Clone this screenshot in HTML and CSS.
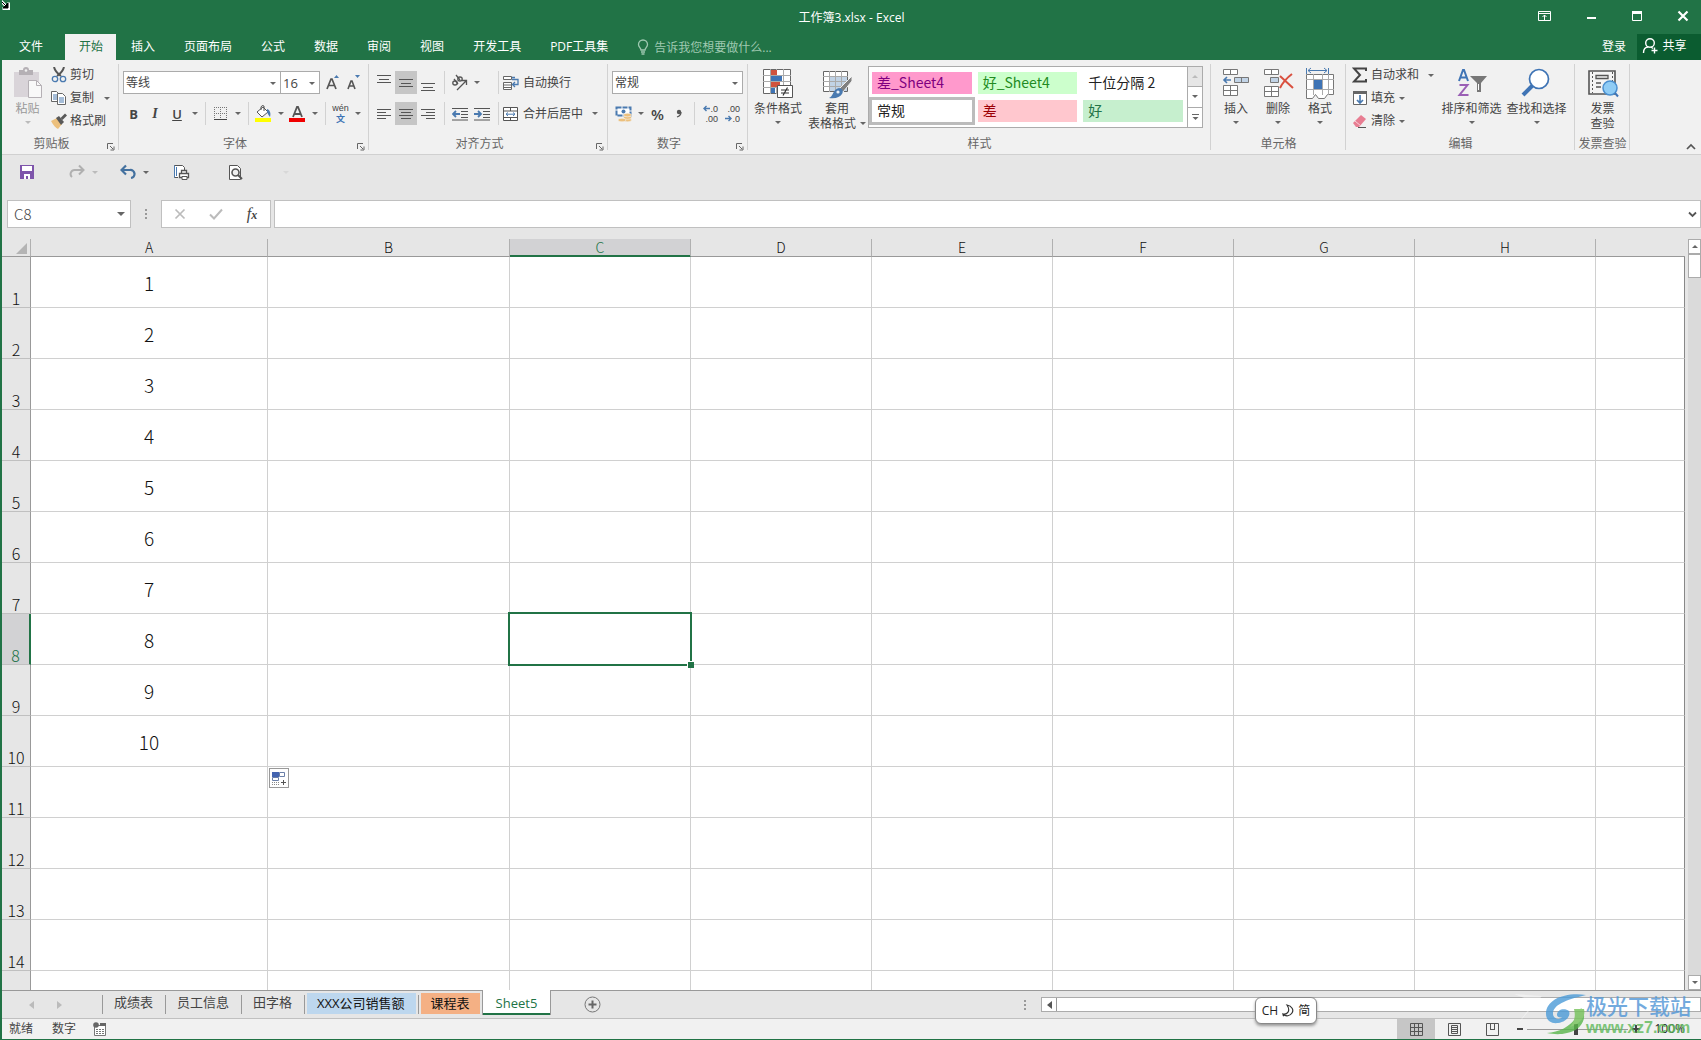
FILE: index.html
```html
<!DOCTYPE html>
<html lang="zh-CN">
<head>
<meta charset="utf-8">
<title>工作簿3.xlsx - Excel</title>
<link rel="stylesheet" href="styles.css">
</head>
<body>
<div class="app">
<header class="top">
  <svg class="cursor" width="10" height="10" viewBox="0 0 10 10"><path d="M1 1l6 6M8.500 2.500v6h-6" stroke="#fff" stroke-width="3" fill="none"/><path d="M1 1l6 6M8 3v5H3z" stroke="#000" stroke-width="1" fill="#000"/></svg>
  <div class="titlebar">
    <h1 class="title">工作簿3.xlsx - Excel</h1>
    <div class="wincontrols">
      <button aria-label="功能区显示选项"><svg width="14" height="12" viewBox="0 0 14 12"><path d="M.5 1.500h12v9H.5zM.5 3.500h12M6.500 10V5M4.500 7l2-2 2 2" fill="none" stroke="#fff"/></svg></button>
      <button aria-label="最小化"><svg width="12" height="12" viewBox="0 0 12 12"><path d="M2 8h9" stroke="#fff" stroke-width="2"/></svg></button>
      <button aria-label="最大化"><svg width="12" height="12" viewBox="0 0 12 12"><path d="M1.500 1.500h9v9h-9z" fill="none" stroke="#fff"/><path d="M1 1h10v3H1z" fill="#fff"/></svg></button>
      <button aria-label="关闭"><svg width="12" height="12" viewBox="0 0 12 12"><path d="M1.500 1.500l9 9M10.500 1.500l-9 9" stroke="#fff" stroke-width="2.200"/></svg></button>
    </div>
  </div>
  <nav class="tabs">
    <button class="tab file">文件</button>
    <button class="tab active">开始</button>
    <button class="tab">插入</button>
    <button class="tab">页面布局</button>
    <button class="tab">公式</button>
    <button class="tab">数据</button>
    <button class="tab">审阅</button>
    <button class="tab">视图</button>
    <button class="tab">开发工具</button>
    <button class="tab">PDF工具集</button>
    <label class="tell"><svg width="12" height="16" viewBox="0 0 12 16"><path d="M4 11c0-2-2.500-3-2.500-5.500a4.500 4.500 0 0 1 9 0C10.500 8 8 9 8 11zM4 13h4M4.500 15h3" fill="none" stroke="#9fc9b1" stroke-width="1.300"/></svg><input type="text" placeholder="告诉我您想要做什么..." aria-label="告诉我您想要做什么"></label>
    <button class="signin">登录</button>
    <button class="share"><svg width="17" height="18" viewBox="0 0 17 18"><circle cx="8" cy="6" r="4.300" fill="none" stroke="#fff" stroke-width="1.400"/><path d="M1.500 16c0-4 2-6 5-6M9 10l2 1.500M12.500 10.500v6M9.500 13.500h6" fill="none" stroke="#fff" stroke-width="1.400"/></svg>共享</button>
  </nav>
</header>

<section class="ribbon" aria-label="开始">
  <div class="group clipboard">
    <div class="body">
      <button class="big paste"><svg width="32" height="32" viewBox="0 0 32 32"><path d="M2 5h25v25H2z" fill="#d9d4d9"/><path d="M7 3h4a3 3 0 0 1 6 0h4v5H7z" fill="#b5b0b5"/><circle cx="14" cy="3.500" r="1.300" fill="#f1f1f1"/><path d="M16.500 13.500h8l5 5v12h-13z" fill="#f8f8f8" stroke="#b5b0b5"/><path d="M24.500 13.500v5h5" fill="none" stroke="#b5b0b5"/></svg><span>粘贴</span><i class="caret"></i></button>
      <div class="stack">
        <button class="mini"><svg width="16" height="16" viewBox="0 0 16 16"><path d="M3 0c1 4 4 7 7 9M13 0c-1 4-4 7-7 9" fill="none" stroke="#555" stroke-width="2"/><circle cx="4" cy="12" r="2.700" fill="none" stroke="#4a7ab0" stroke-width="1.300"/><circle cx="12" cy="12" r="2.700" fill="none" stroke="#4a7ab0" stroke-width="1.300"/></svg>剪切</button>
        <div class="line"><button class="mini"><svg width="16" height="16" viewBox="0 0 16 16"><path d="M.5 1.500h5l2 2v8h-7z" fill="#fff" stroke="#666"/><path d="M2 5h4M2 7h4M2 9h4" stroke="#4a7ab0"/><path d="M6.500 3.500h5l3 3v8h-8z" fill="#fff" stroke="#666"/><path d="M8 8h5M8 10h5M8 12h5" stroke="#4a7ab0"/></svg>复制</button><button class="drop" aria-label="复制选项"><i class="caret"></i></button></div>
        <button class="mini"><svg width="16" height="16" viewBox="0 0 16 16"><path d="M0 8l6-3 5 6-4 5c-2-1-5-4-7-8z" fill="#ecc07d"/><path d="M5 5l3-2 5 6-3 3z" fill="#595959"/><path d="M9.500 5l4.500-4.500 2 2L11.500 7z" fill="#595959"/></svg>格式刷</button>
      </div>
    </div>
    <div class="caption">剪贴板<button class="launch" aria-label="剪贴板设置"><svg width="8" height="8" viewBox="0 0 8 8"><path d="M.5 6V.5H6M3 3l3 3M7 3.500V7H3.500" fill="none" stroke="#666"/></svg></button></div>
  </div>

  <div class="group font">
    <div class="body rows">
      <div class="line">
        <span class="sel fontname"><select aria-label="字体"><option>等线</option></select><i class="caret"></i></span><span class="sel fontsize"><select aria-label="字号"><option>16</option></select><i class="caret"></i></span>
        <button class="ico grow" aria-label="增大字号"><svg width="16" height="16" viewBox="0 0 16 16"><path d="M2 14L6 4h1l4 10M3.500 10.500h6" fill="none" stroke="#555" stroke-width="1.700"/><path d="M9 3l2.500-3L14 3z" fill="#4a7ab0"/></svg></button>
        <button class="ico" aria-label="减小字号"><svg width="16" height="16" viewBox="0 0 16 16"><path d="M2 14l3-8h1l3 8M3 11h5" fill="none" stroke="#555" stroke-width="1.600"/><path d="M9 0l2.500 3L14 0z" fill="#4a7ab0"/></svg></button>
      </div>
      <div class="line">
        <button class="ico b">B</button><button class="ico w i">I</button><button class="ico w u">U</button><button class="drop" aria-label="下划线选项"><i class="caret"></i></button>
        <i class="sep"></i>
        <button class="ico" aria-label="边框"><svg width="14" height="14" viewBox="0 0 14 14"><path d="M.5 0v13M6.500 0v13M12.500 0v13M0 .5h13M0 6.500h13" stroke="#777" stroke-dasharray="1 1"/><path d="M0 12.500h13" stroke="#444"/></svg></button><button class="drop" aria-label="边框选项"><i class="caret"></i></button>
        <i class="sep"></i>
        <button class="ico" aria-label="填充颜色"><svg width="17" height="17" viewBox="0 0 17 17"><path d="M2 7l6-5 5 5-6 5z" fill="#fff" stroke="#555"/><path d="M6 5V2a2 2 0 0 1 3-1v5" fill="none" stroke="#555"/><path d="M12 4c3 1 4 4 3 8-1-1-2-3-3-5z" fill="#4a7ab0"/><path d="M0 13h16v4H0z" fill="#ff0"/></svg></button><button class="drop" aria-label="填充颜色选项"><i class="caret"></i></button>
        <button class="ico" aria-label="字体颜色"><svg width="17" height="17" viewBox="0 0 17 17"><path d="M4 12L8 2h1l4 10M5.500 9h6" fill="none" stroke="#555" stroke-width="1.800"/><path d="M0 13h16v4H0z" fill="#f00000"/></svg></button><button class="drop" aria-label="字体颜色选项"><i class="caret"></i></button>
        <i class="sep"></i>
        <button class="ico wen"><span>wén</span><b>文</b></button><button class="drop" aria-label="拼音选项"><i class="caret"></i></button>
      </div>
    </div>
    <div class="caption">字体<button class="launch" aria-label="字体设置"><svg width="8" height="8" viewBox="0 0 8 8"><path d="M.5 6V.5H6M3 3l3 3M7 3.500V7H3.500" fill="none" stroke="#666"/></svg></button></div>
  </div>

  <div class="group align">
    <div class="body rows">
      <div class="line">
        <button class="ico w" aria-label="顶端对齐"><svg width="14" height="16" viewBox="0 0 14 16"><path d="M0 .5h14M2 4.500h10M0 7.500h14" stroke="#555"/></svg></button>
        <button class="ico w on" aria-label="垂直居中"><svg width="14" height="16" viewBox="0 0 14 16"><path d="M0 4.500h14M2 8.500h10M0 11.500h14" stroke="#555"/></svg></button>
        <button class="ico w" aria-label="底端对齐"><svg width="14" height="16" viewBox="0 0 14 16"><path d="M0 8.500h14M2 12.500h10M0 15.500h14" stroke="#555"/></svg></button>
        <i class="sep"></i>
        <span class="pair"><button class="ico" aria-label="方向"><svg width="17" height="17" viewBox="0 0 17 17"><g fill="none" stroke="#555" stroke-width="1.300"><ellipse cx="4" cy="9" rx="2.200" ry="2"/><path d="M3 5l4 5"/><ellipse cx="9" cy="5" rx="2.200" ry="2"/><path d="M5 1l4 5M6 16L15 7M11 6.500h4.500V11"/></g></svg></button><button class="drop" aria-label="方向选项"><i class="caret"></i></button></span>
        <i class="sep"></i>
        <button class="mini"><svg width="16" height="16" viewBox="0 0 16 16"><path d="M.5 1.500h8v3h-8zM.5 7.500h8v7h-8zM0 10h8M0 12.500h8" fill="#fff" stroke="#666"/><path d="M9 2.500h3M9 4.500h6v5h-5M12 7L9.500 9.500 12 12" fill="none" stroke="#4a7ab0" stroke-width="1.300"/></svg>自动换行</button>
      </div>
      <div class="line">
        <button class="ico w" aria-label="左对齐"><svg width="14" height="12" viewBox="0 0 14 12"><path d="M0 1.500h14M0 4.500h9M0 7.500h14M0 10.500h9" stroke="#555"/></svg></button>
        <button class="ico w on" aria-label="居中"><svg width="14" height="12" viewBox="0 0 14 12"><path d="M0 1.500h14M2 4.500h10M0 7.500h14M2 10.500h10" stroke="#555"/></svg></button>
        <button class="ico w" aria-label="右对齐"><svg width="14" height="12" viewBox="0 0 14 12"><path d="M0 1.500h14M5 4.500h9M0 7.500h14M5 10.500h9" stroke="#555"/></svg></button>
        <i class="sep"></i>
        <span class="pair"><button class="ico w" aria-label="减少缩进量"><svg width="16" height="14" viewBox="0 0 16 14"><path d="M0 1.500h16M9 4.500h7M9 7.500h7M9 10.500h7M0 13h16" stroke="#555"/><path d="M1 7h7M4 4L1 7l3 3" fill="none" stroke="#4a7ab0" stroke-width="1.800"/></svg></button><button class="ico w" aria-label="增加缩进量"><svg width="16" height="14" viewBox="0 0 16 14"><path d="M0 1.500h16M9 4.500h7M9 7.500h7M9 10.500h7M0 13h16" stroke="#555"/><path d="M0 7h7M4 4l3 3-3 3" fill="none" stroke="#4a7ab0" stroke-width="1.800"/></svg></button></span>
        <i class="sep"></i>
        <button class="mini"><svg width="16" height="16" viewBox="0 0 16 16"><path d="M.5 1.500h14v13H.5zM.5 5h14M.5 11.500h14M7.500 1.500V5M7.500 11.500v3" fill="#fff" stroke="#555"/><path d="M3 8.200h9M5 6.500L3 8.200 5 10M10 6.500l2 1.700L10 10" fill="none" stroke="#4a7ab0"/></svg>合并后居中</button><button class="drop far" aria-label="合并选项"><i class="caret"></i></button>
      </div>
    </div>
    <div class="caption">对齐方式<button class="launch" aria-label="对齐设置"><svg width="8" height="8" viewBox="0 0 8 8"><path d="M.5 6V.5H6M3 3l3 3M7 3.500V7H3.500" fill="none" stroke="#666"/></svg></button></div>
  </div>

  <div class="group number">
    <div class="body rows">
      <div class="line"><span class="sel numfmt"><select aria-label="数字格式"><option>常规</option></select><i class="caret"></i></span></div>
      <div class="line">
        <button class="ico w" aria-label="会计数字格式"><svg width="17" height="16" viewBox="0 0 17 16"><path d="M1.500 1.500h14v8h-14z" fill="#fff" stroke="#4a7ab0" stroke-width="2" stroke-dasharray="5 1"/><circle cx="8.500" cy="5.500" r="2" fill="#4a7ab0"/><g fill="#ecc07d" stroke="#f1f1f1" stroke-width=".6"><ellipse cx="12.500" cy="14" rx="4" ry="1.800"/><ellipse cx="12.500" cy="11.500" rx="4" ry="1.800"/><ellipse cx="12.500" cy="9" rx="4" ry="1.800"/><ellipse cx="7" cy="14" rx="4" ry="1.800"/></g></svg></button><button class="drop" aria-label="货币选项"><i class="caret"></i></button>
        <button class="ico pct">%</button>
        <button class="ico" aria-label="千位分隔样式"><svg width="6" height="10" viewBox="0 0 6 10"><circle cx="3" cy="3" r="2.200" fill="#555"/><path d="M5 3c0 3-1 4-4 5" fill="none" stroke="#555" stroke-width="1.300"/></svg></button>
        <i class="sep"></i>
        <button class="ico w dec"><span><svg width="7" height="7" viewBox="0 0 7 7"><path d="M1 3.500h6M3.500 1L1 3.500 3.500 6" fill="none" stroke="#4a7ab0" stroke-width="1.400"/></svg>.0</span><span>.00</span></button>
        <button class="ico w dec"><span>.00</span><span><svg width="7" height="7" viewBox="0 0 7 7"><path d="M0 3.500h6M3.500 1L6 3.500 3.500 6" fill="none" stroke="#4a7ab0" stroke-width="1.400"/></svg>.0</span></button>
      </div>
    </div>
    <div class="caption">数字<button class="launch" aria-label="数字设置"><svg width="8" height="8" viewBox="0 0 8 8"><path d="M.5 6V.5H6M3 3l3 3M7 3.500V7H3.500" fill="none" stroke="#666"/></svg></button></div>
  </div>

  <div class="group styles">
    <div class="body">
      <button class="big cond"><svg width="32" height="32" viewBox="0 0 32 32"><path d="M1.500 2.500h27v24h-27z" fill="#fff" stroke="#666"/><path d="M1 8.500h28M1 14.500h28M1 20.500h28M8.500 2v25M14.500 2v25M21.500 2v25" stroke="#aaa"/><path d="M9 3h6v5H9zM9 15h9v5H9z" fill="#d1533d"/><path d="M9 9h11v5H9zM9 21h4v5H9z" fill="#3f74b5"/><path d="M15.500 18.500h15v12h-15z" fill="#fff" stroke="#555"/><path d="M19 23h8M19 26h8M25.500 20.500l-4.500 8" stroke="#333" stroke-width="1.200"/></svg><span>条件格式</span><i class="caret"></i></button>
      <button class="big tblfmt"><svg width="32" height="32" viewBox="0 0 32 32"><path d="M2.500 4.500h24v20h-24z" fill="#fff" stroke="#666"/><path d="M8 9h18v15H8z" fill="#c1d3e6"/><path d="M2 9.500h25M2 14.500h25M2 19.500h25M8.500 4v21M14.500 4v21M20.500 4v21" stroke="#aaa"/><path d="M31 9v5L22 25l-4-3z" fill="#808080" stroke="#f1f1f1"/><path d="M18 21c3 0 5 3 3 6s-6 5-13 4c4-1 4-9 10-10z" fill="#4a7ab0"/><circle cx="17" cy="25" r="1.600" fill="#e8f0f8"/></svg><span>套用</span><span class="wcaret">表格格式<i class="caret"></i></span></button>
      <div class="gallery">
        <div class="swatches">
          <button class="pink">差_Sheet4</button><button class="lime">好_Sheet4</button><button>千位分隔 2</button>
          <button class="picked">常规</button><button class="bad">差</button><button class="good">好</button>
        </div>
        <div class="galscroll">
          <button class="dim" aria-label="上一行"><i class="caret up"></i></button>
          <button aria-label="下一行"><i class="caret"></i></button>
          <button aria-label="更多样式"><svg width="7" height="7" viewBox="0 0 7 7"><path d="M0 .5h7" stroke="#666"/><path d="M.5 3h6L3.500 6z" fill="#666"/></svg></button>
        </div>
      </div>
    </div>
    <div class="caption">样式</div>
  </div>

  <div class="group cells">
    <div class="body">
      <button class="big"><svg width="32" height="32" viewBox="0 0 32 32"><g fill="#fff" stroke="#777"><path d="M3.500 2.500h14v5h-14zM10.500 2.500v5M3.500 18.500h14v10h-14zM10.500 18.500v10M3.500 23.500h14"/><path d="M14.500 10.500h14v5h-14zM21.500 10.500v5" fill="#c1d3e6"/></g><path d="M4 13h7M7 10l-3 3 3 3" fill="none" stroke="#4a7ab0" stroke-width="1.600"/></svg><span>插入</span><i class="caret"></i></button>
      <button class="big"><svg width="32" height="32" viewBox="0 0 32 32"><g fill="#fff" stroke="#777"><path d="M2.500 2.500h14v5h-14zM9.500 2.500v5M2.500 19.500h14v10h-14zM9.500 19.500v10M2.500 24.500h14"/><path d="M8.500 10.500h8v5h-8z" fill="#c1d3e6"/></g><path d="M18 9l13 12M30 7c-4 3-9 8-12 14" fill="none" stroke="#d9503f" stroke-width="2"/></svg><span>删除</span><i class="caret"></i></button>
      <button class="big"><svg width="32" height="32" viewBox="0 0 32 32"><path d="M2.500 1v6M24.500 1v6M4 3.500h19M7 1L4 3.500 7 6M20 1l3 2.500L20 6" fill="none" stroke="#4a7ab0"/><path d="M2.500 7.500h27v20h-6l-3 4h-6l-3-4-3 4H2.500z" fill="#fff" stroke="#777"/><path d="M2 12.500h28M2 22.500h28M9.500 7v21M18.500 7v21M24.500 7v21" stroke="#aaa"/><path d="M10 13h8v9h-8z" fill="#3f74b5"/></svg><span>格式</span><i class="caret"></i></button>
    </div>
    <div class="caption">单元格</div>
  </div>

  <div class="group edit">
    <div class="body">
      <div class="stack">
        <div class="line"><button class="mini"><svg width="16" height="16" viewBox="0 0 16 16"><path d="M14 4V1.500H2l6 6.500-6 6.500h12V12" fill="none" stroke="#444" stroke-width="2"/></svg>自动求和</button><button class="drop far" aria-label="求和选项"><i class="caret"></i></button></div>
        <button class="mini"><svg width="16" height="16" viewBox="0 0 16 16"><path d="M1.500 1.500h13v13h-13z" fill="#fff" stroke="#666"/><path d="M1 1h14v3H1z" fill="#666"/><path d="M8 5v8M5 10l3 3 3-3" fill="none" stroke="#4a7ab0" stroke-width="1.700"/></svg>填充<i class="caret"></i></button>
        <button class="mini"><svg width="16" height="16" viewBox="0 0 16 16"><path d="M1 10l8-8 5 4-7 8H4z" fill="#e87d92"/><path d="M3 8l6 5" stroke="#f8d0d8"/><path d="M6 14.500h8" stroke="#555"/></svg>清除<i class="caret"></i></button>
      </div>
      <button class="big wide"><svg width="32" height="32" viewBox="0 0 32 32"><path d="M3 14L7 3h1l4 11M4.500 10.500h6" fill="none" stroke="#3f74b5" stroke-width="2"/><path d="M3.500 18h8l-8 10h9" fill="none" stroke="#9a5fb5" stroke-width="2"/><path d="M14 9h17l-6 7v9h-4v-9z" fill="#777"/><path d="M22.500 17v6" stroke="#fff"/></svg><span>排序和筛选</span><i class="caret"></i></button>
      <button class="big wide"><svg width="32" height="32" viewBox="0 0 32 32"><path d="M12 18L2 28" stroke="#3f74b5" stroke-width="4"/><circle cx="18" cy="12" r="9.500" fill="#fff" stroke="#3f74b5" stroke-width="1.700"/></svg><span>查找和选择</span><i class="caret"></i></button>
    </div>
    <div class="caption">编辑</div>
  </div>

  <div class="group invoice">
    <div class="body">
      <button class="big"><svg width="32" height="32" viewBox="0 0 32 32"><path d="M2 4h26v23H2z" fill="#f4f4f4" stroke="#555" stroke-width="1.600"/><path d="M5.500 5v21M25.500 5v21" stroke="#555" stroke-dasharray="2 2"/><path d="M9 8.500h12v3H9z" fill="none" stroke="#555" stroke-width="1.300"/><path d="M9 16h5M9 20h5" stroke="#555" stroke-width="1.500"/><circle cx="23" cy="21" r="7" fill="#8fccf5" stroke="#4a8fd0" stroke-width="1.500"/><path d="M28 26l3 3.500" stroke="#3f74b5" stroke-width="2"/></svg><span>发票</span><span>查验</span></button>
    </div>
    <div class="caption">发票查验</div>
  </div>
  <button class="collapse" aria-label="折叠功能区"><svg width="10" height="7" viewBox="0 0 10 7"><path d="M1 6l4-4 4 4" fill="none" stroke="#555" stroke-width="1.700"/></svg></button>
</section>

<div class="qat">
  <button aria-label="保存"><svg width="16" height="16" viewBox="0 0 16 16"><path d="M1 1h14v14H1z" fill="#7e55ab"/><path d="M3 2h10v5H3zM5 10h6v5H5z" fill="#fff"/><path d="M7 12h2v3H7z" fill="#7e55ab"/></svg></button>
  <button class="dim redo" aria-label="恢复"><svg width="16" height="16" viewBox="0 0 16 16"><path d="M14 6H6a4 4 0 0 0-3 7M10 1.500L14.500 6 10 10.500" fill="none" stroke="#b0b0b0" stroke-width="2"/></svg></button><button class="dim more" aria-label="恢复选项"><i class="caret"></i></button>
  <button aria-label="撤消"><svg width="16" height="16" viewBox="0 0 16 16"><path d="M2 6h8a4 4 0 0 1 1 8M6 1.500L1.500 6 6 10.500" fill="none" stroke="#44719f" stroke-width="2.200"/></svg></button><button class="more" aria-label="撤消选项"><i class="caret"></i></button>
  <button class="print" aria-label="快速打印"><svg width="17" height="17" viewBox="0 0 17 17"><path d="M5 13.500H1.500v-12h8l2 2V7" fill="#fff" stroke="#555"/><path d="M1.500 1.500v12M3.500 3v9" stroke="#4a7ab0"/><path d="M8.500 6.500h5v3h-5zM6.500 9.500h9v4h-9z" fill="#fff" stroke="#555" stroke-width="1.300"/><path d="M9 12.500h5v3H9z" fill="#fff" stroke="#555"/></svg></button>
  <button class="preview" aria-label="打印预览"><svg width="17" height="17" viewBox="0 0 17 17"><path d="M2.500 1.500h8l3 3v11h-11z" fill="#fff" stroke="#555"/><circle cx="8.500" cy="8.500" r="3.500" fill="#eee" stroke="#555" stroke-width="1.600"/><path d="M11 11l4 4" stroke="#555" stroke-width="2"/></svg></button>
  <button class="ghost" aria-label="自定义快速访问工具栏"><i class="caret"></i></button>
</div>

<div class="formula">
  <div class="namebox"><input type="text" value="C8" aria-label="名称框"><button aria-label="名称列表"><i class="caret big-caret"></i></button></div>
  <i class="dots"></i>
  <div class="fxbtns">
    <button aria-label="取消"><svg width="12" height="12" viewBox="0 0 12 12"><path d="M1.500 1.500l9 9M10.500 1.500l-9 9" stroke="#bbb" stroke-width="1.700"/></svg></button>
    <button aria-label="输入"><svg width="14" height="12" viewBox="0 0 14 12"><path d="M1 6.500l4 4L13 1.500" fill="none" stroke="#bbb" stroke-width="2"/></svg></button>
    <button class="fx" aria-label="插入函数">f<small>x</small></button>
  </div>
  <div class="fxbox"><input type="text" aria-label="编辑栏"><button aria-label="展开编辑栏"><svg width="9" height="7" viewBox="0 0 9 7"><path d="M1 1.500l3.500 3.500L8 1.500" fill="none" stroke="#555" stroke-width="1.800"/></svg></button></div>
</div>

<main class="work">
  <div class="sheet">
    <table class="grid">
      <colgroup><col class="c-head"><col class="c-a"><col class="c-b"><col class="c-n"><col class="c-n"><col class="c-n"><col class="c-n"><col class="c-n"><col class="c-n"><col></colgroup>
      <thead><tr><th class="corner"><i></i></th><th>A</th><th>B</th><th class="cur">C</th><th>D</th><th>E</th><th>F</th><th>G</th><th>H</th><th></th></tr></thead>
      <tbody>
        <tr><th>1</th><td>1</td><td></td><td></td><td></td><td></td><td></td><td></td><td></td><td></td></tr>
        <tr><th>2</th><td>2</td><td></td><td></td><td></td><td></td><td></td><td></td><td></td><td></td></tr>
        <tr><th>3</th><td>3</td><td></td><td></td><td></td><td></td><td></td><td></td><td></td><td></td></tr>
        <tr><th>4</th><td>4</td><td></td><td></td><td></td><td></td><td></td><td></td><td></td><td></td></tr>
        <tr><th>5</th><td>5</td><td></td><td></td><td></td><td></td><td></td><td></td><td></td><td></td></tr>
        <tr><th>6</th><td>6</td><td></td><td></td><td></td><td></td><td></td><td></td><td></td><td></td></tr>
        <tr><th>7</th><td>7</td><td></td><td></td><td></td><td></td><td></td><td></td><td></td><td></td></tr>
        <tr><th class="cur">8</th><td>8</td><td></td><td class="selected"><i class="frame"></i><i class="handle"></i></td><td></td><td></td><td></td><td></td><td></td><td></td></tr>
        <tr><th>9</th><td>9</td><td></td><td></td><td></td><td></td><td></td><td></td><td></td><td></td></tr>
        <tr><th>10</th><td>10</td><td></td><td></td><td></td><td></td><td></td><td></td><td></td><td></td></tr>
        <tr><th>11</th><td></td><td class="anchor"><button class="autofill" aria-label="自动填充选项"><svg width="16" height="16" viewBox="0 0 16 16"><path d="M1 2h7v5H1z" fill="#4464b0"/><path d="M8.500 2.500h5v4h-5zM1.500 7.500h6v3h-6z" fill="#fff" stroke="#6a7fa8"/><path d="M1 12.500h7M1 14.500h7" stroke="#888" stroke-dasharray="1 1"/><path d="M10 12.500h5M12.500 10v5" stroke="#555"/></svg></button></td><td></td><td></td><td></td><td></td><td></td><td></td><td></td></tr>
        <tr><th>12</th><td></td><td></td><td></td><td></td><td></td><td></td><td></td><td></td><td></td></tr>
        <tr><th>13</th><td></td><td></td><td></td><td></td><td></td><td></td><td></td><td></td><td></td></tr>
        <tr><th>14</th><td></td><td></td><td></td><td></td><td></td><td></td><td></td><td></td><td></td></tr>
        <tr><th></th><td></td><td></td><td></td><td></td><td></td><td></td><td></td><td></td><td></td></tr>
      </tbody>
    </table>
  </div>
  <div class="vscroll"><button aria-label="向上滚动"><i class="caret up"></i></button><div class="thumb"></div><div class="track"></div><button aria-label="向下滚动"><i class="caret"></i></button></div>
</main>

<div class="sheetbar">
  <div class="sheetnav"><button aria-label="上一个工作表"><svg width="5" height="8" viewBox="0 0 5 8"><path d="M5 0v8L0 4z" fill="#bbb"/></svg></button><button aria-label="下一个工作表"><svg width="5" height="8" viewBox="0 0 5 8"><path d="M0 0v8l5-4z" fill="#bbb"/></svg></button></div>
  <button class="stab">成绩表</button>
  <button class="stab">员工信息</button>
  <button class="stab">田字格</button>
  <button class="stab blue"><span>XXX公司销售额</span></button>
  <button class="stab orange"><span>课程表</span></button>
  <button class="stab current">Sheet5</button>
  <button class="add" aria-label="新工作表"><svg width="17" height="17" viewBox="0 0 17 17"><circle cx="8.500" cy="8.500" r="7.500" fill="none" stroke="#777"/><path d="M4.500 8.500h8M8.500 4.500v8" stroke="#666" stroke-width="2"/></svg></button>
  <i class="dots"></i>
  <div class="hscroll"><button aria-label="向左滚动"><svg width="5" height="8" viewBox="0 0 5 8"><path d="M5 0v8L0 4z" fill="#555"/></svg></button><div class="hthumb"></div></div>
</div>

<footer class="status">
  <span>就绪</span><span>数字</span>
  <button class="macro" aria-label="录制宏"><svg width="14" height="14" viewBox="0 0 14 14"><path d="M1.500 3.500h11v10h-11z" fill="#fff" stroke="#777"/><path d="M7 1h6v3H7z" fill="#666"/><circle cx="3" cy="3" r="2.800" fill="#666"/><path d="M3 7.500h9M3 9.500h9M3 11.500h9" stroke="#777" stroke-dasharray="2 1"/></svg></button>
  <div class="views">
    <button class="on" aria-label="普通"><svg width="13" height="13" viewBox="0 0 13 13"><path d="M.5.5h12v12H.5zM.5 4.500h12M.5 8.500h12M4.500.5v12M8.500.5v12" fill="none" stroke="#555"/></svg></button>
    <button aria-label="页面布局视图"><svg width="13" height="13" viewBox="0 0 13 13"><path d="M.5.5h12v12H.5zM3.500 2.500h6v8h-6zM4 4.500h5M4 6.500h5M4 8.500h5" fill="none" stroke="#555"/></svg></button>
    <button aria-label="分页预览"><svg width="13" height="13" viewBox="0 0 13 13"><path d="M.5.5h12v12H.5zM4.500.5v6M8.500.5v6M4 6.500h5" fill="none" stroke="#555"/></svg></button>
  </div>
  <div class="zoom"><button class="minus" aria-label="缩小"><svg width="6" height="2" viewBox="0 0 6 2"><path d="M0 1h6" stroke="#444" stroke-width="2"/></svg></button><input type="range" min="0" max="100" value="48" aria-label="显示比例"><button aria-label="放大"><svg width="8" height="8" viewBox="0 0 8 8"><path d="M0 4h8M4 0v8" stroke="#444" stroke-width="2"/></svg></button><button class="pctv">100%</button></div>
</footer>

<div class="ime">CH<svg width="12" height="13" viewBox="0 0 12 13"><path d="M5 1c5 1 7 5 5 8s-6 4-9 1c4 1 8-3 4-9zM1 10c0 1 0 2 1 2" fill="none" stroke="#333" stroke-width="1.200"/></svg>简</div>

<div class="mark">
  <svg width="72" height="46" viewBox="0 0 72 46"><path d="M0 2l28 2L2 34l18-24z" fill="#fff" opacity=".5"/><path d="M72 3C50 0 32 8 32 22c0 6 5 10 12 9 8-1 13-7 11-12-4-3-12-2-12 4 0 2 3 3 5 2-3 4-9 1-9-3 0-9 12-14 33-19z" fill="#4b9bd8"/><path d="M67 16c7 8 2 22-14 25-8 2-14 1-20 0 14-1 28-8 34-25z" fill="#58b64a"/><path d="M60 17h10c2 8-4 15-14 18 4-5 6-10 4-18z" fill="#74c158"/></svg>
  <div><b>极光下载站</b><span>www.xz7.com</span></div>
</div>
</div>
</body>
</html>
```
FILE: styles.css
```css
*{box-sizing:border-box}
body{margin:0;font:12px/16px "Open Sans","Noto Sans CJK SC",sans-serif;color:#444;background:#e6e6e6}
button,input,select{font:inherit;color:inherit;border:0;background:none;padding:0;margin:0;border-radius:0;outline:0}
button{display:flex;align-items:center;justify-content:center;white-space:nowrap}
svg{display:block;flex:none}
.app{position:relative;display:flex;flex-direction:column;height:100vh;border:solid #217346;border-width:0 0 1px 2px;overflow:hidden}

.caret{flex:none;width:0;height:0;border:solid transparent;border-width:3px 3px 0;border-top-color:#666}
.caret.up{border-width:0 3px 3px;border-bottom-color:#666}
.big-caret{border-width:4px 4px 0}

/* title bar and ribbon tabs */
.top{flex:none;background:#217346;color:#fff}
.cursor{position:absolute;left:-2px;top:0}
.titlebar{display:flex;height:34px;align-items:center;position:relative;padding-top:2px}
.title{margin:0;font-size:12px;font-weight:400;flex:1;text-align:center}
.wincontrols{position:absolute;right:0;top:0;display:flex;height:32px}
.wincontrols button{width:46px}
.wincontrols button:last-child{width:41px;padding-left:5px}
.tabs{display:flex;height:26px}
.tab{padding:0 14px 1px 15px}
.tab.file{padding:0 17px 1px;margin-right:5px}
.tab.active{background:#f1f1f1;color:#217346;padding:0 13px 1px 14px}
.tell{display:flex;align-items:center;gap:5px;margin-left:15px;flex:1}
.tell input{flex:1;height:20px;min-width:0}
.tell input::placeholder{color:#9fc9b1;opacity:1}
.signin{width:46px;padding-bottom:1px}
.share{width:64px;background:#0b5c30;gap:3px;padding:0 9px 2px 0}

/* ribbon */
.ribbon{flex:none;display:flex;height:95px;background:#f1f1f1;border-bottom:1px solid #d0d0d0}
.group{display:flex;flex-direction:column;padding:4px 0 0;position:relative}
.group::after{content:"";position:absolute;right:0;top:4px;bottom:4px;width:1px;background:#d2d2d2}
.body{display:flex;flex:none;height:70px}
.rows{flex-direction:column;padding:7px 0 0 4px;gap:8px}
.caption{height:16px;margin-top:2px;text-align:center;color:#666;padding-right:18px;position:relative;white-space:nowrap}
.styles .caption,.cells .caption,.edit .caption,.invoice .caption{padding-right:0}
.launch{position:absolute;right:3px;bottom:0;width:10px;height:10px}
.line{display:flex;align-items:center}
.rows .line{height:23px}
.clipboard{width:117px}.font{width:250px}.align{width:239px}.number{width:140px}
.styles{width:463px}.cells{width:135px}.edit{width:229px}.invoice{width:55px}
.big{flex-direction:column;justify-content:flex-start;width:42px;padding-top:3px;line-height:15px}
.big>span{flex:none}
.big svg{margin-bottom:2px}
.big>.caret{margin-top:5px}
.wcaret{display:flex;align-items:center;gap:4px}
.paste{width:48px;padding-left:3px;color:#999}
.paste .caret,.dim .caret{border-top-color:#bbb;border-bottom-color:#bbb}
.stack{display:flex;flex-direction:column;align-items:flex-start;padding-left:1px}
.stack>*{height:23px}
.stack .mini{padding-bottom:1px}
.mini{gap:4px}
.mini .caret{margin-left:1px}
.stack .mini{gap:3px}
.drop{width:13px;height:22px}
.stack .drop{margin-left:6px}
.far,.stack .drop.far{margin-left:5px}
.cells .body{padding-left:4px}
.edit .stack{padding-left:6px;width:93px}
.wide{width:65px}
.invoice .big{width:100%}
.cond{width:60px}
.tblfmt{width:60px;padding-right:2px}
.ico{width:21px;height:23px;flex:none}
.ico.w{width:22px}
.grow{margin-left:2px}
.on{background:#c6c6c6}
.b{font-weight:700;font-size:13px}
.i{font:italic 700 14px "Liberation Serif",serif}
.u{font-weight:600;text-decoration:underline;font-size:13px}
.pct{font-size:15px;font-weight:600}
.sep{width:10px;height:23px;flex:none;background:linear-gradient(#d2d2d2,#d2d2d2) center/1px 100% no-repeat}
.font .sep{width:9px}
.pair{display:flex;width:44px}
.sel{position:relative;display:flex;height:23px;border:1px solid #ababab;background:#fff}
.sel select{appearance:none;width:100%;padding-left:2px}
.sel .caret{position:absolute;right:4px;top:10px;pointer-events:none}
.fontname{width:158px}.fontsize{width:39px;border-left:0;font-size:13px}.numfmt{width:131px}
.wen,.dec{flex-direction:column;font:9px/10px "Liberation Sans","Noto Sans CJK SC",sans-serif}
.wen b{color:#3f74b5;line-height:12px}
.dec{align-items:flex-end}
.dec span{display:flex;align-items:center;padding-right:3px}
.gallery{display:flex;width:335px;height:62px;margin-top:2px;border:1px solid #ababab;background:#fff}
.swatches{display:grid;grid-template-columns:repeat(3,1fr);grid-auto-rows:22px;gap:6px;padding:5px 4px 0 3px;flex:1;font:14px/20px "Noto Sans CJK SC",sans-serif;color:#222}
.swatches button{justify-content:flex-start;padding:0 0 2px 5px}
.pink{background:#ff99cc;color:#800080}
.lime{background:#ccffcc;color:#228b22}
.bad{background:#ffc7ce;color:#9c0006}
.good{background:#c6efce;color:#217346}
.picked{box-shadow:0 0 0 3px #bcbcbc}
.galscroll{display:flex;flex-direction:column;width:15px;border-left:1px solid #ababab}
.galscroll button{flex:1;border-bottom:1px solid #ababab}
.galscroll button:last-child{border-bottom:0}
.galscroll .dim{background:#e6e6e6}
.collapse{margin:auto 4px 3px auto;width:12px;height:10px}

/* quick access toolbar */
.qat{flex:none;display:flex;align-items:center;height:45px;padding:0 0 11px 17px}
.qat button{width:16px;height:20px}
.qat .redo{margin-left:34px}
.qat .more{width:20px;margin-right:15px}
.qat .print{width:17px;margin-left:2px}
.qat .preview{width:17px;margin-left:37px}
.qat .ghost{margin-left:34px;opacity:.1}

/* formula bar */
.formula{flex:none;display:flex;height:28px}
.namebox{display:flex;width:124px;margin-left:5px;background:#fff;border:1px solid #c0c0c0}
.namebox input{flex:1;min-width:0;padding:0 0 2px 6px;font:15px "Noto Sans CJK SC",sans-serif;font-weight:300}
.namebox button{width:18px}
.dots{width:2px;height:10px;margin:auto 14px;background:repeating-linear-gradient(#999 0 2px,transparent 2px 4px)}
.fxbtns{display:flex;width:110px;background:#fff;border:1px solid #c0c0c0;margin-right:3px;justify-content:space-around}
.fxbtns button{width:36px}
.fx{font:italic 16px "Liberation Serif",serif}
.fx small{font-size:12px;font-weight:700;padding-top:3px}
.fxbox{display:flex;flex:1;background:#fff;border:1px solid #c0c0c0}
.fxbox input{flex:1;padding-left:6px}
.fxbox button{width:16px}

/* worksheet */
.work{flex:1;min-height:0;display:flex;padding-top:11px;border-bottom:1px solid #999}
.sheet{flex:1;min-width:0;overflow:hidden}
.grid{table-layout:fixed;width:100%;border-collapse:separate;border-spacing:0;font-family:"Noto Sans CJK SC",sans-serif;color:#111}
.c-head{width:29px}.c-a{width:237px}.c-b{width:242px}.c-n{width:181px}
.grid th{font-weight:300;font-size:15px;line-height:17px;padding:0}
.grid thead th{height:18px;font-size:14px;border-right:1px solid #b0b0b0;border-bottom:1px solid #999}
.grid thead th:last-child{border-right:0}
.grid thead .cur{background:#d2d2d4;color:#217346;box-shadow:inset 0 -1px #217346;border-bottom-color:#217346}
.corner i{display:block;width:0;height:0;margin:2px 3px 0 auto;border:solid transparent;border-width:0 0 11px 11px;border-bottom-color:#b4b4b4}
.grid tbody th{height:51px;vertical-align:bottom;border-right:1px solid #999;border-bottom:1px solid #c0c0c0;font-size:16px}
.grid tbody .cur{background:#d2d2d4;color:#217346;border-right:2px solid #217346}
.grid td{background:#fff;border-right:1px solid #d0d0d0;border-bottom:1px solid #d0d0d0;text-align:center;font-size:19px;line-height:24px;font-weight:300;padding:1px 0 0}
.grid td:last-child{border-right-color:#888}
.selected,.anchor{position:relative}
.frame{position:absolute;inset:-2px;border:2px solid #217346}
.handle{position:absolute;right:-4px;bottom:-4px;width:7px;height:7px;background:#217346;border:solid #fff;border-width:1px 0 0 1px}
.autofill{position:absolute;left:1px;top:1px;width:20px;height:20px;background:#fff;border:1px solid #999}
.vscroll{display:flex;flex-direction:column;width:13px;margin-left:3px}
.vscroll button{height:15px;background:#fff;border:1px solid #ababab}
.thumb{height:24px;background:#fff;border:1px solid #ababab}
.track{flex:1;background:#dadada}

/* sheet tabs */
.sheetbar{flex:none;display:flex;height:28px;border-bottom:1px solid #c0c0c0;font-size:13px}
.sheetnav{display:flex;width:101px;padding-left:15px;border-right:1px solid #999;margin:4px 0}
.sheetnav button{width:28px}
.stab{padding:0 13px 5px 11px;position:relative}
.stab:not(.current):not(.orange)::after{content:"";position:absolute;right:0;top:4px;bottom:4px;width:1px;background:#999}
.stab span{padding:2px 10px 3px;color:#111}
.stab.blue{padding:1px 3px 4px 2px}
.stab.orange{padding:1px 2px 4px}
.orange span{background:#f4b084}
.stab.blue span{background:#bdd7ee;padding-right:11px}
.stab.current{background:#fff;color:#217346;margin:-1px 0 3px;padding:0 13px;border:solid #999;border-width:0 1px;box-shadow:inset 0 -2px #217346}
.add{width:20px;margin-left:31px}
.sheetbar .dots{margin:auto 15px auto auto}
.hscroll{display:flex;flex:0 1 660px;height:15px;margin:6px 0 0;background:#fff;border:1px solid #ababab}
.hscroll button{width:15px;border-right:1px solid #999}

/* status bar */
.status{flex:none;display:flex;align-items:center;height:20px;background:#f1f1f1;padding-left:7px;gap:19px}
.macro{margin-left:-2px}
.views{display:flex;margin:0 -13px 0 auto;height:20px}
.views button{width:38px}
.zoom{display:flex;align-items:center;margin-right:16px}
.zoom input{appearance:none;width:101px;height:1px;background:#999;margin:0 4px}
.zoom input::-webkit-slider-thumb{appearance:none;width:4px;height:11px;background:#444}
.pctv{margin-left:14px;color:#222}

/* floating input indicator and site mark */
.ime{position:absolute;right:384px;bottom:15px;display:flex;align-items:center;justify-content:center;gap:4px;width:62px;height:27px;background:#fff;border:1px solid #888;border-radius:6px;box-shadow:0 2px 3px #999;color:#222}
.mark{position:absolute;right:10px;bottom:1px;display:flex;align-items:flex-end;opacity:.8;pointer-events:none}
.mark div{display:flex;flex-direction:column;margin-left:-19px}
.mark svg{margin-right:19px}
.mark b{font:500 21px/26px "Noto Sans CJK SC",sans-serif;color:#4f95d6}
.mark span{font:700 16px/20px "Liberation Sans",sans-serif;color:#5fb95c}
```
